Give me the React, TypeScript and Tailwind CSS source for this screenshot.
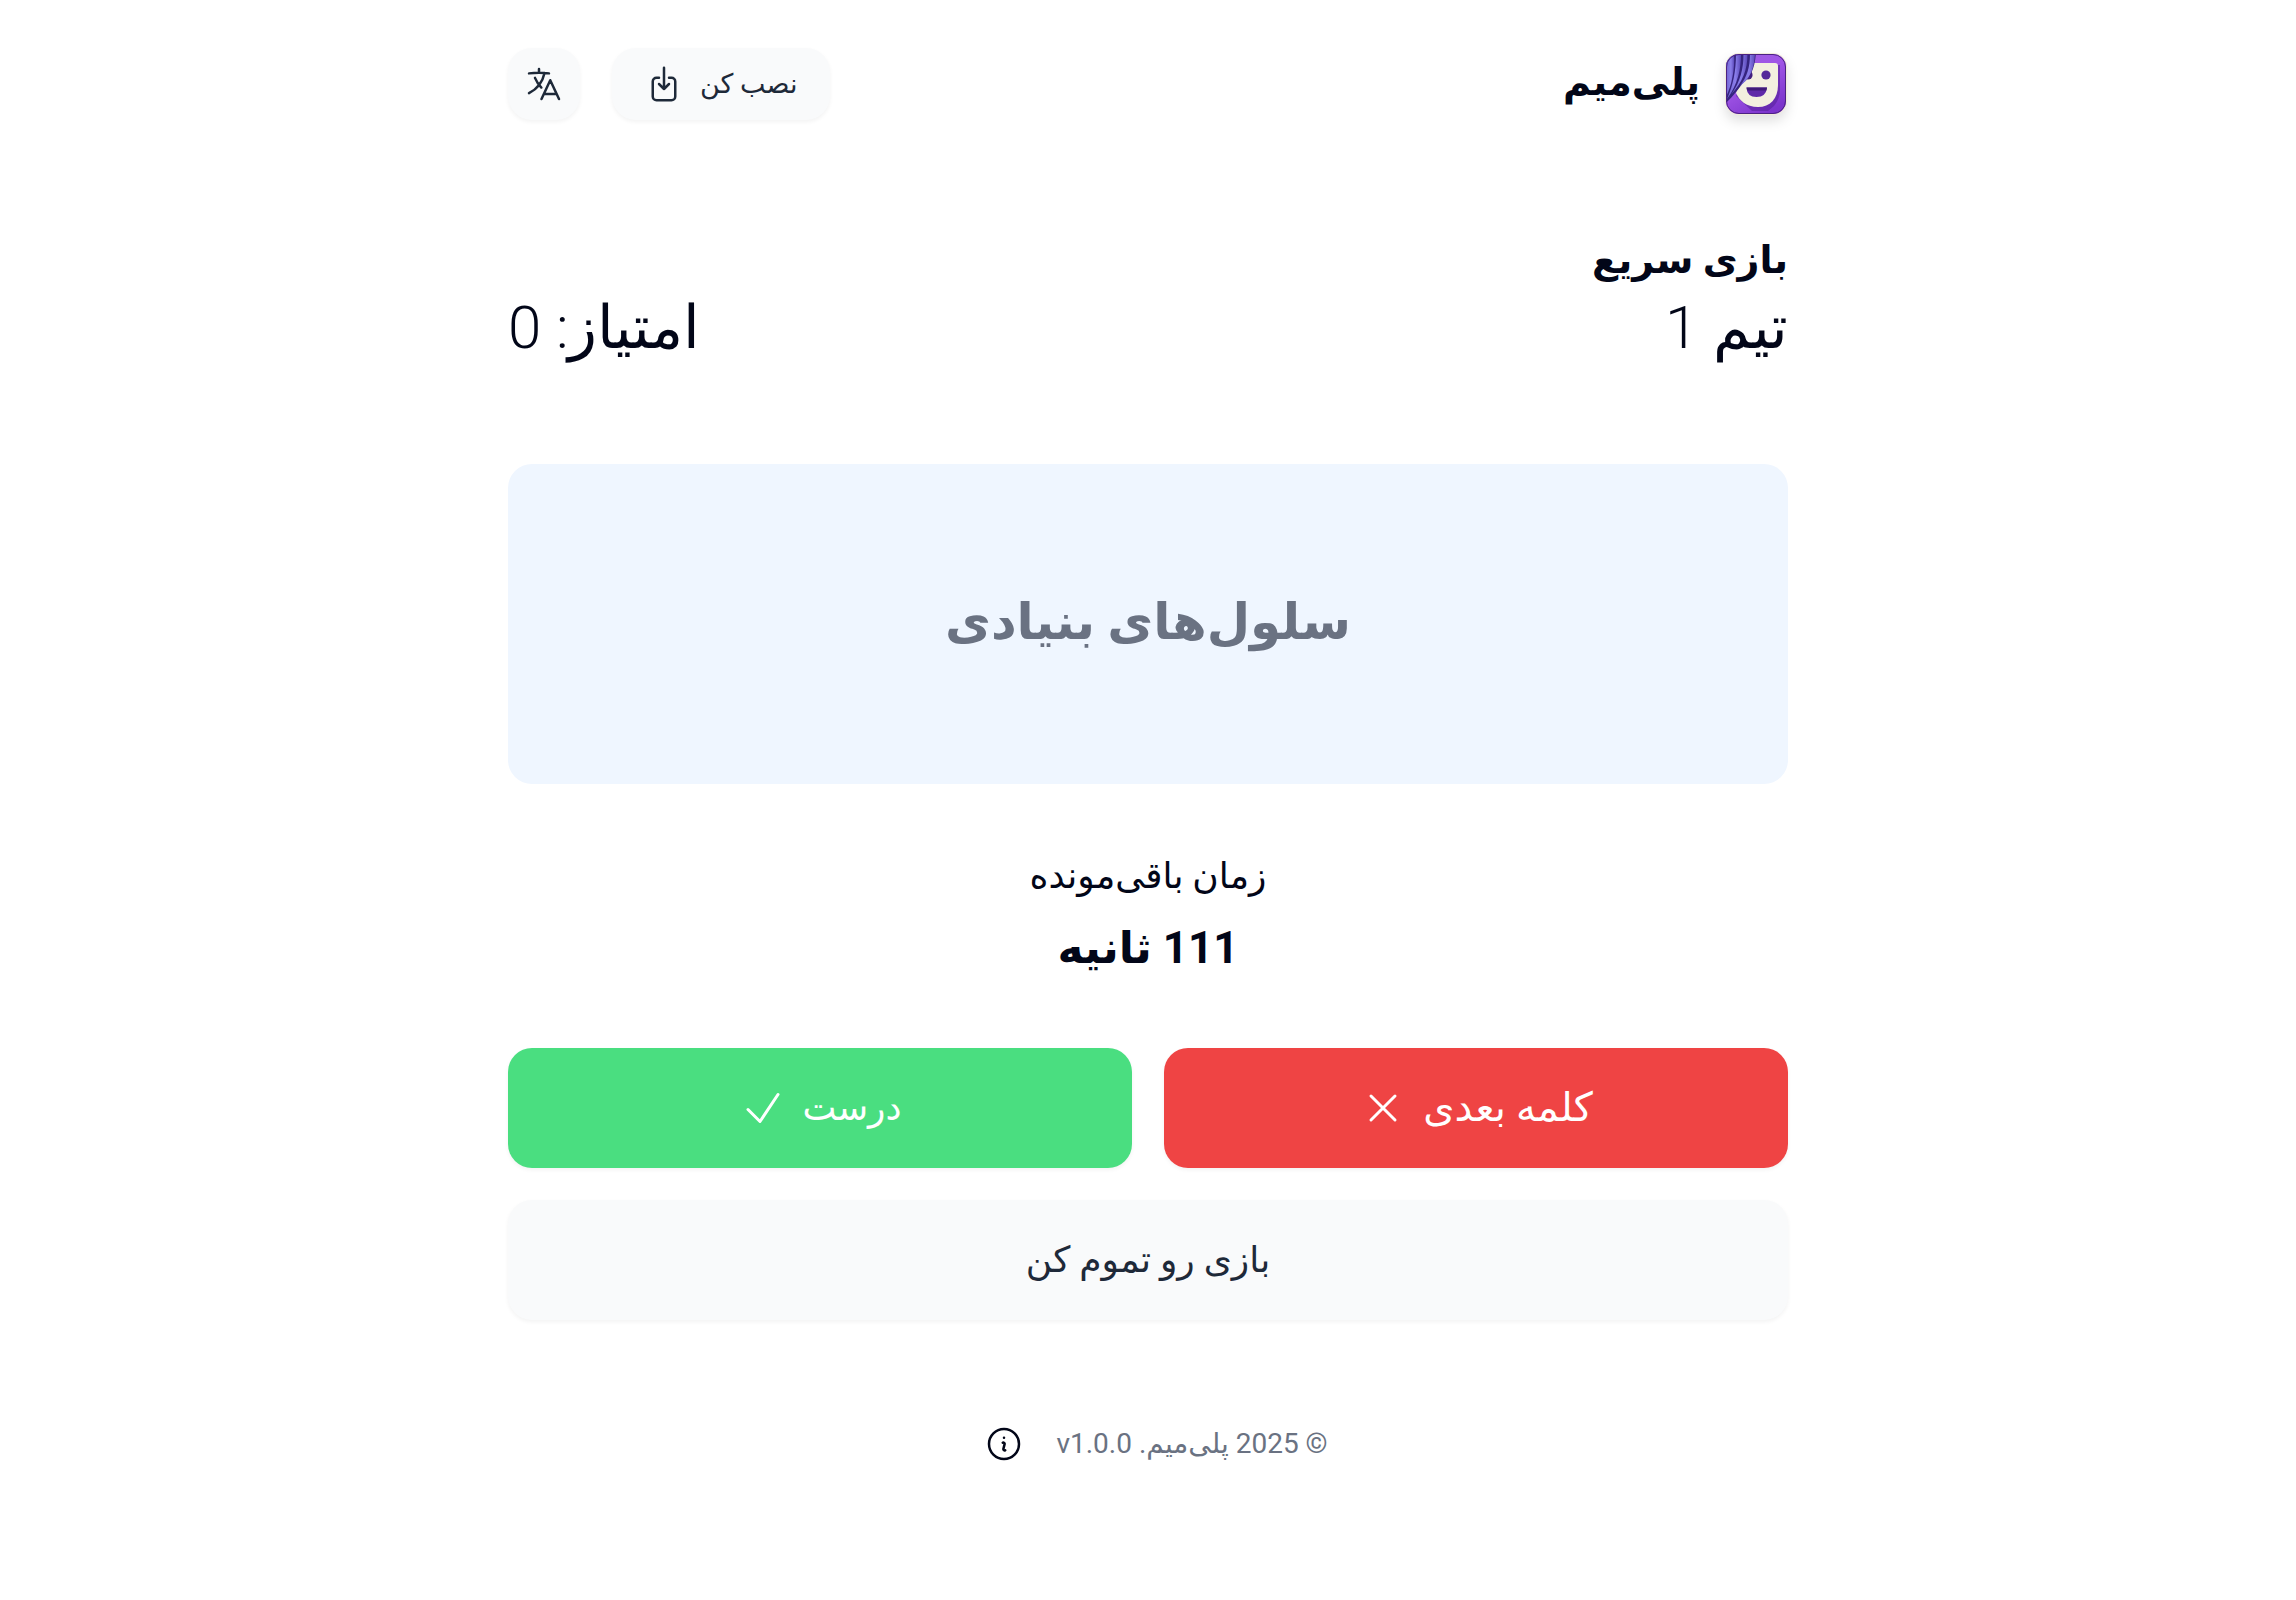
import {
  HiOutlineArrowDownOnSquare,
  HiOutlineCheck,
  HiOutlineInformationCircle,
  HiOutlineLanguage,
  HiOutlineXMark,
} from "react-icons/hi2";

function Logo() {
  return (
    <svg
      viewBox="0 0 64 64"
      className="size-16 drop-shadow-[0_6px_6px_rgba(0,0,0,0.12)]"
      role="img"
      aria-label="پلی‌میم"
    >
      <defs>
        <linearGradient id="back" x1="0" y1="0" x2="0.6" y2="1">
          <stop offset="0" stopColor="#9a5fe0" />
          <stop offset="0.5" stopColor="#a055e6" />
          <stop offset="1" stopColor="#7c34cc" />
        </linearGradient>
        <linearGradient id="fold" x1="0" y1="0" x2="1" y2="0">
          <stop offset="0" stopColor="#6f62d0" />
          <stop offset="0.6" stopColor="#8a7eea" />
          <stop offset="1" stopColor="#5a48b8" />
        </linearGradient>
        <clipPath id="tile">
          <rect x="2" y="2" width="60" height="60" rx="13" />
        </clipPath>
      </defs>
      <rect x="1" y="1" width="62" height="62" rx="14" fill="#f1ead9" />
      <g clipPath="url(#tile)">
        <rect width="64" height="64" fill="url(#back)" />
        <path d="M25 13h31v24q0 10-6 17l-6 5H28L12 44z" fill="#57219c" opacity="0.6" />
        <path d="M22 11h29q3 0 3 3v19c0 14-8 22-20 22S15 48 12 41z" fill="#f3f0df" />
        <path d="M22.500 35.500h20.500q-1 9.500-10.500 9.500t-10-9.500z" fill="#5f2aa8" />
        <path d="M22.500 35.500h20.500l-.5 3H23z" fill="#3f1a78" />
        <circle cx="42" cy="23" r="4.600" fill="#54289a" />
        <circle cx="24" cy="23" r="4.600" fill="#43207f" />
        <path d="M0 0h32c-1 17-6 26-13 31C13 39 9 44 3 50H0z" fill="#35247f" />
        <path d="M2 2h8c1 15-2 30-8 43z" fill="url(#fold)" />
        <path d="M12 2h5c0 15-3 30-14 45 6-14 9-28 9-45z" fill="url(#fold)" />
        <path d="M19.500 2h4c0 16-5 28-16 40 9-13 12-25 12-40z" fill="url(#fold)" />
        <path d="M26 2h5c-1 17-6 25-15 32 7-9 10-19 10-32z" fill="url(#fold)" />
      </g>
      <rect x="2.500" y="2.500" width="59" height="59" rx="12.500" fill="none" stroke="#4b2283" strokeWidth="1" />
    </svg>
  );
}

export default function App() {
  return (
    <div
      dir="rtl"
      lang="fa"
      className="min-h-screen bg-white px-8 font-[Roboto,'DejaVu_Sans',sans-serif] text-slate-950"
    >
      <div className="mx-auto flex max-w-[1280px] flex-col">
        <header className="flex items-center justify-between pt-12">
          <div className="flex items-center gap-6">
            <Logo />
            <span className="pb-1 text-[38px] leading-[64px] font-bold">پلی‌میم</span>
          </div>
          <div className="flex items-center gap-8">
            <button
              type="button"
              className="flex h-[72px] items-center gap-4 rounded-3xl bg-gray-50 px-8 text-[27px] text-gray-800 shadow-[0_2px_4px_rgba(0,0,0,0.05)]"
            >
              نصب کن
              <HiOutlineArrowDownOnSquare className="size-10" />
            </button>
            <button
              type="button"
              aria-label="تغییر زبان"
              className="flex size-[72px] items-center justify-center rounded-3xl bg-gray-50 text-gray-800 shadow-[0_2px_4px_rgba(0,0,0,0.05)]"
            >
              <HiOutlineLanguage className="size-10" />
            </button>
          </div>
        </header>

        <main className="flex flex-col pt-28">
          <h1 className="text-[38px] leading-[56px] font-bold">بازی سریع</h1>
          <div className="flex justify-between text-[60px] leading-[80px] font-light">
            <p>تیم 1</p>
            <p>امتیاز: 0</p>
          </div>

          <div className="mt-24 flex h-80 items-center justify-center rounded-3xl bg-blue-50">
            <p className="pb-1 text-[50px] leading-[80px] font-bold text-gray-500">سلول‌های بنیادی</p>
          </div>

          <div className="mt-16 flex flex-col items-center">
            <h2 className="text-4xl leading-[56px]">زمان باقی‌مونده</h2>
            <p className="mt-3 mb-1 text-[44px] leading-[64px] font-bold">111 ثانیه</p>
          </div>

          <div className="mt-16 grid grid-cols-2 gap-8">
            <button
              type="button"
              className="flex h-[120px] items-center justify-center gap-4 rounded-3xl bg-[#ef4444] text-[40px] text-white shadow-[0_2px_4px_rgba(0,0,0,0.05)]"
            >
              کلمه بعدی
              <HiOutlineXMark className="size-12" />
            </button>
            <button
              type="button"
              className="flex h-[120px] items-center justify-center gap-4 rounded-3xl bg-[#4ade80] text-4xl text-white shadow-[0_2px_4px_rgba(0,0,0,0.05)]"
            >
              درست
              <HiOutlineCheck className="size-12" />
            </button>
          </div>
          <button
            type="button"
            className="mt-8 h-[120px] rounded-3xl bg-gray-50 text-4xl text-gray-800 shadow-[0_2px_4px_rgba(0,0,0,0.05)]"
          >
            بازی رو تموم کن
          </button>
        </main>

        <footer className="flex items-center justify-center gap-4 pt-[88px]">
          <p className="text-[28px] leading-[56px] text-gray-500">
            © 2025 پلی‌میم. <bdi>v1.0.0</bdi>
          </p>
          <button type="button" aria-label="درباره" className="p-4">
            <HiOutlineInformationCircle className="size-10" />
          </button>
        </footer>
      </div>
    </div>
  );
}
